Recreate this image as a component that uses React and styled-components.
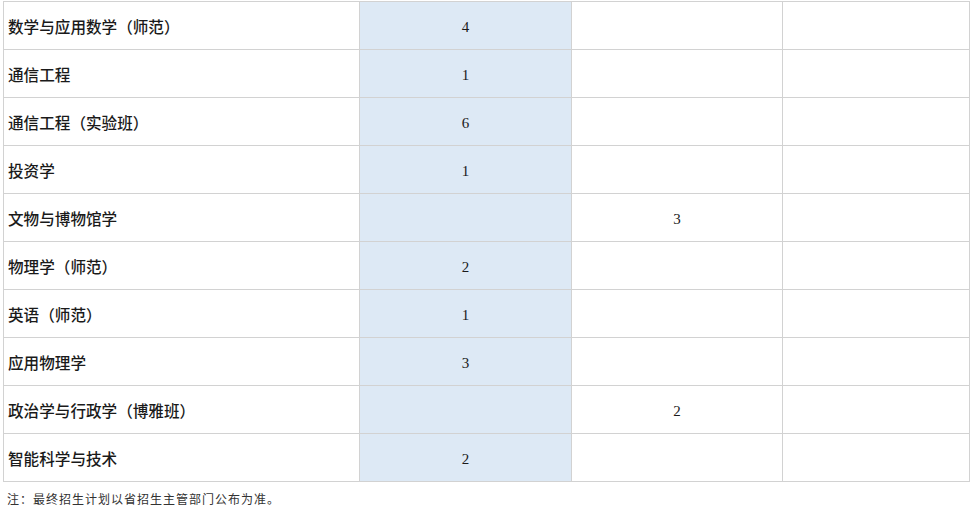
import React from "react";
import styled, { createGlobalStyle } from "styled-components";

const GlobalStyle = createGlobalStyle`
  body {
    margin: 0;
    background: #ffffff;
  }
`;

const Page = styled.div`
  padding: 1px 0 0 3px;
  width: 966px;
`;

const Table = styled.table`
  width: 966px;
  border-collapse: collapse;
  table-layout: fixed;
`;

const Col = styled.col`
  width: ${(p) => p.$w}px;
`;

const Cell = styled.td`
  box-sizing: border-box;
  height: 48px;
  padding: 0;
  border: 1px solid #d2d2d2;
  background: ${(p) => (p.$shaded ? "#dde9f5" : "#ffffff")};
  color: #1a1a1a;
  vertical-align: middle;
`;

const NameCell = styled(Cell)`
  padding-left: 4px;
  text-align: left;
  font-size: 15.6px;
  font-weight: 500;
  font-family: "Noto Sans CJK SC", sans-serif;
`;

const NumCell = styled(Cell)`
  padding-top: 3px;
  text-align: center;
  font-size: 15px;
  line-height: 18px;
  font-family: "Liberation Serif", serif;
`;

const Note = styled.p`
  margin: 10px 0 0 4px;
  font-size: 12px;
  line-height: 14px;
  letter-spacing: 1px;
  color: #333333;
  font-family: "Noto Sans CJK SC", sans-serif;
`;

const widths = [356, 212, 211, 187];

const rows = [
  ["数学与应用数学（师范）", "4", ""],
  ["通信工程", "1", ""],
  ["通信工程（实验班）", "6", ""],
  ["投资学", "1", ""],
  ["文物与博物馆学", "", "3"],
  ["物理学（师范）", "2", ""],
  ["英语（师范）", "1", ""],
  ["应用物理学", "3", ""],
  ["政治学与行政学（博雅班）", "", "2"],
  ["智能科学与技术", "2", ""],
];

export default function App() {
  return (
    <>
      <GlobalStyle />
      <Page>
        <Table>
          <colgroup>
            {widths.map((w, i) => (
              <Col key={i} $w={w} />
            ))}
          </colgroup>
          <tbody>
            {rows.map(([name, a, b]) => (
              <tr key={name}>
                <NameCell>{name}</NameCell>
                <NumCell $shaded>{a}</NumCell>
                <NumCell>{b}</NumCell>
                <NumCell />
              </tr>
            ))}
          </tbody>
        </Table>
        <Note>注：最终招生计划以省招生主管部门公布为准。</Note>
      </Page>
    </>
  );
}
